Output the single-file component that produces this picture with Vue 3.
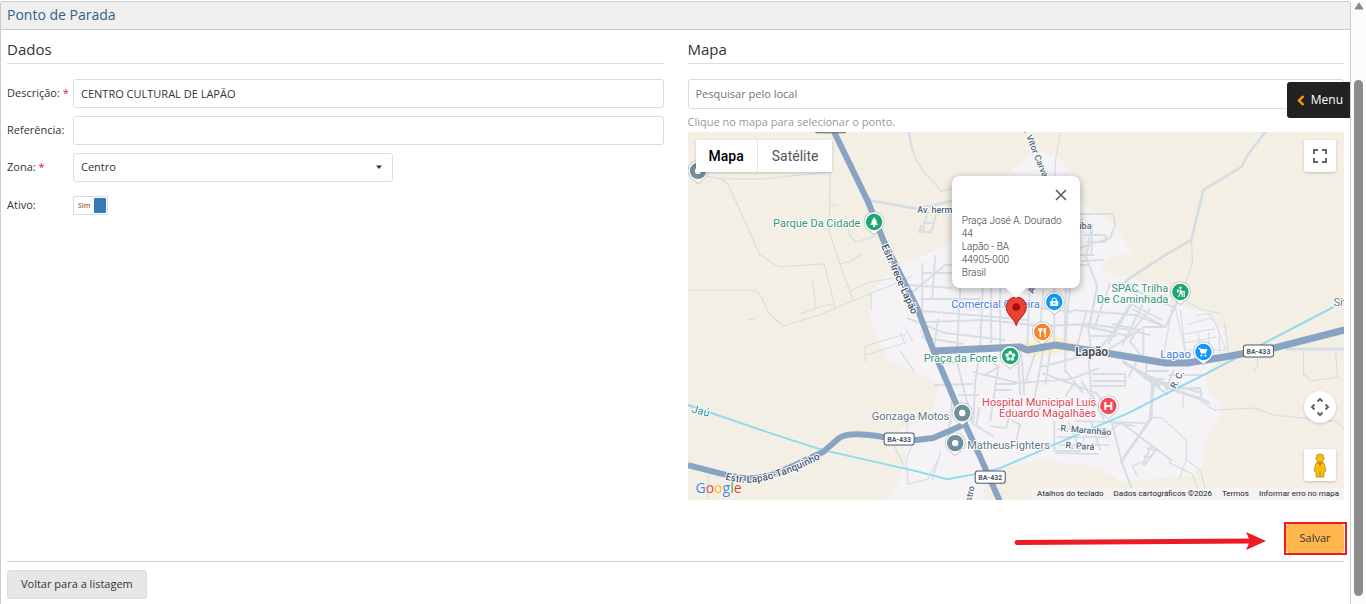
<script setup>
import { ref } from 'vue'

const descricao = ref('CENTRO CULTURAL DE LAPÃO')
const referencia = ref('')
const zona = ref('Centro')
const ativo = ref(true)
const busca = ref('')

const ruralRoads = [
  'M697 172l9 4 15 3h45l25-3 39-4M721 179l7 5 32 71 19 12 45-3 9 35 2 11',
  'M830 172l-1 60 10 30 14 38M829 205h9M845 216l5 20 6 6 20-6M838 264l12-2 12-8M850 291l20-9 30-5',
  'M688 290h66l5 3 10 20 14 13 36-11 36-15 39-16 18-8M812 280l4 28-16 6M833 304l-18 4M871 294v16M747 320l8-1',
  'M909 132l5 24 9 15 18 20 14-3M1060 132l-5 30v18M908 132l4 20M1191 237l1 25-8 25M1185 301l15 8 22 5',
  'M1200 401l14 9 40-2 20 7 46 5 15 1 10 9M1303 351v23l8 7 26-4-2-26M1257 355v12l-4 4',
  'M1150 417l12 1 24 22v19l-7 19M1186 460l14 10 5 20M894 446l14 28M708 475v25',
  'M866 362l-2-14 4-3 38-11M866 355l38-12M900 332l5 12M906 330l7 12M920 330l10 18M900 351l14 20',
  'M914 440l-8 20 2 24 20-5 10-20M941 450l-9 30M927 413l-20 7v17'
]
const townRoads = [
  'M921 225l-2 8M928 210l-6 22h9l6-20M923 223h9M1079 214l34 0 2 11-5 13-36 12M1084 235l21 0 1 7-20 0M1079 225h13l-1 30',
  'M922 263v51M935 255l-3 45M903 300l42-35h22M923 273h29M908 285l44 3M920 299h60M911 310l118 10',
  'M907 318l38 15 60 7M926 322l58-2 60 6 44-2 42 6M921 337l42 7M938 318l-4 30M960 288l-3 60M983 275l-3 73M991 288v55M966 309l57-3 50 6M1000 288v58M1030 280l-3 65M1043 289l-4 54M1054 286v55M1066 280l-2 65',
  'M1082 218l-9 40-5 46-3 41M1091 225l-5 33 11 28-9 43 4 30M1054 255h40M1056 265h32M1081 261l22-1',
  'M1073 310l62 5 30 12M1074 324l15 3 40 9M1089 336h28M1086 312l-12 45M1097 286l-8 41',
  'M1128 283l10 9-28 44-20 23M1138 292l-30 52M1110 283l-17 47M1122 300l40 20M1112 324l28 6M1132 309l33 18M1118 283l57 25M1142 305l-20 40M1150 309l-27 33M1165 327l12-25M1104 352l40-25 20 0M1143 330v28M1150 335l-15-3-5 10 12 15',
  'M938 355l14 42-3 30M948 363l30-3-3 22-2 43M957 363l15 60M934 385l39-1M958 395h21M973 372l45 11 53-4 28-11M985 355l13 12-8 54M998 367l-13 8M1018 358l2 37M1021 351l3 44M1035 353l-12 35M1043 350l-9 50M1050 350l-5 35M1065 350v23M1040 367l47-12M1042 373l54 20 16 20M1065 370l18 23M1088 357l3 35 13 28M1124 362l44 33M1146 363v14M1144 379l20 0M1147 371h21M1136 362l-8 15M1174 369l-9 20M1165 389l35-1 1 11M1168 375h35M1158 381l44 12',
  'M1092 374h33v12h-33M1092 381h33M1075 381l-10 16M1081 381l16 25M1048 401l-14 12M995 384h21M995 390l16 0M979 407l-3 19 17 10M990 426l16 2 3-12h12M1012 420l8 5-4 15',
  'M1154 385l-5 33M1075 421l70 2M1054 421v30l26 0M1057 429h50M1057 437h52M1059 445h50M1055 453l43 1M1068 421l12 30M1090 420l10 30M1109 422l26 4M1112 424l9 36 10 28M1120 422l52 39M1151 418l-31 45M1111 430l10-8M1151 445l-9 20M1156 449l-12 16M1146 448l9 2M1143 456l9 1'
]
const smallRoads = [
  'M1180 310l6 49M1174 304l12 52M1172 306l-9 50M1186 325l20-6 7 0M1184 334l30-5M1184 343l32-6M1188 350h38M1198 333l2 26M1208 333l2 20M1219 333v20M1213 319l13 32M1224 322l4 31M1196 315l14-1 9 18',
  'M1142 461l-10 5 5 10M1168 462l24 12 8 22M1088 431l-12 22M1184 391l-2 18'
]
const wideRoads = [
  'M867 200l50 9 35-8 15 3',
  'M1265 132l-17 22-7 13-38 23-12 50-26 15-37 24-12 12M1285 349h58M1124 363l50 27 27 9 8 4',
  'M1152 380l-1 38-28 40M1160 386l-38-25'
]
const shields = [
  { x: 815, y: 121, w: 31, label: '' },
  { x: 884, y: 433, w: 30, label: 'BA-433' },
  { x: 1243, y: 345, w: 30, label: 'BA-433' },
  { x: 975, y: 471, w: 30, label: 'BA-432' }
]
const pins = [
  { x: 698, y: 171, color: '#718e9b', kind: 'dot' },
  { x: 874, y: 222, color: '#1ea672', kind: 'tree' },
  { x: 1180, y: 292, color: '#1ea672', kind: 'hiker' },
  { x: 1054, y: 302, color: '#1398f7', kind: 'bag' },
  { x: 1042, y: 332, color: '#f9812a', kind: 'fork' },
  { x: 1010, y: 356, color: '#1ea672', kind: 'flower' },
  { x: 1203, y: 352, color: '#1398f7', kind: 'cart' },
  { x: 1108, y: 406, color: '#f64758', kind: 'hospital' },
  { x: 962, y: 413, color: '#718e9b', kind: 'dot' },
  { x: 955, y: 443, color: '#718e9b', kind: 'dot' }
]
</script>

<template>
  <div class="page">
    <main class="panel">
      <header class="panel-head"><h1>Ponto de Parada</h1></header>

      <div class="columns">
        <section>
          <h2>Dados</h2>
          <form class="fields">
            <label for="descricao">Descrição: <b>*</b></label>
            <input id="descricao" v-model="descricao" class="box" type="text">
            <label for="referencia">Referência:</label>
            <input id="referencia" v-model="referencia" class="box" type="text">
            <label for="zona">Zona: <b>*</b></label>
            <div class="select-wrap">
              <select id="zona" v-model="zona" class="box">
                <option>Centro</option>
              </select>
              <svg width="8" height="5" viewBox="0 0 8 5" aria-hidden="true"><path d="M1 .5h6L4 4z" fill="#333" /></svg>
            </div>
            <label for="ativo">Ativo:</label>
            <label class="toggle"><span>Sim</span><input id="ativo" v-model="ativo" type="checkbox"></label>
          </form>
        </section>

        <section>
          <h2>Mapa</h2>
          <input v-model="busca" class="box search" type="text" placeholder="Pesquisar pelo local" aria-label="Pesquisar pelo local">
          <p class="hint">Clique no mapa para selecionar o ponto.</p>

          <div class="map">
            <svg class="canvas" viewBox="688 132 656 368" preserveAspectRatio="xMidYMid slice" role="img" aria-label="Mapa de Lapão">
              <rect x="688" y="132" width="656" height="368" fill="#f4efe4" />
              <path fill="#f5f3f5" d="M1035 152Q1055 150 1073 175L1079 200 1100 216 1115 226 1133 254 1112 256 1100 266 1115 278 1131 274 1155 300 1177 305 1203 312 1222 330 1230 352 1206 372 1207 390 1220 402 1223 409 1203 443 1203 463 1190 476 1160 478 1120 482 1108 473 1085 465 1060 463 1040 460 1010 466 983 477 985 500H888L900 478 906 455 900 428 915 425 933 410 938 387 920 373 890 362 876 335 868 312 873 290 893 267 916 258 950 245 985 200 1015 165z" />
              <path fill="#fbefd0" d="M1022 341l30-6 24 7v9l-48 6z" />
              <g fill="none" stroke="#d5dee5" stroke-linejoin="round">
                <path v-for="d in ruralRoads" :key="d" :d="d" stroke-width="1.200" />
                <path v-for="d in smallRoads" :key="d" :d="d" stroke-width="1.200" />
                <path v-for="d in townRoads" :key="d" :d="d" stroke-width="1.900" />
                <path v-for="d in wideRoads" :key="d" :d="d" stroke-width="2.800" />
              </g>
              <path fill="none" stroke="#8edbed" stroke-width="2" d="M688 405l88 30 47 15 93 21 31 8 28-5 25-6 53-23 77-33 23-12 50-25 130-68" />
              <g fill="none" stroke="#89a3c2" stroke-width="6" stroke-linejoin="round">
                <path d="M688 465l35 9 20 4q25 1 45-10l35-16 16-14q10-7 44-1l33 3 17-2 30-13" />
                <path d="M833 130l35 72 15 38 34 68 16 42 30 70 17 37 20 45" />
                <path stroke-width="7" d="M933 351l87-4 7 3 28-5 45 7 65 11h22l43-7 43-8 71-18" />
              </g>

              <g v-for="s in shields" :key="s.x">
                <rect :x="s.x" :y="s.y" :width="s.w" height="12" rx="2.500" fill="#fff" stroke="#4d5966" />
                <text v-if="s.label" class="shield" :x="s.x + s.w / 2" :y="s.y + 9">{{ s.label }}</text>
              </g>

              <g v-for="p in pins" :key="p.x" :transform="`translate(${p.x} ${p.y})`">
                <path d="M0 13L-5.500 8.500A10.300 10.300 0 1 1 5.500 8.500z" fill="#7d8992" opacity=".5" />
                <path d="M0 12L-5 8A9.600 9.600 0 1 1 5 8z" fill="#fff" />
                <circle r="8.200" :fill="p.color" />
                <circle v-if="p.kind === 'dot'" r="3.200" fill="#fff" />
                <path v-else-if="p.kind === 'tree'" d="M0-5l3 5H2l2 3H1v2h-2V3h-3l2-3h-1z" fill="#fff" />
                <g v-else-if="p.kind === 'hiker'"><circle cx="0" cy="-4.200" r="1.200" fill="#fff" /><path d="M-3.500-2.500h1.800v3h-1.800z" fill="#fff" /><path d="M0-2.500v3.500l-2 4M0 0l1.800 2v3M0-2l2 2h1.500M3.800-1v6" fill="none" stroke="#fff" stroke-width="1.200" /></g>
                <g v-else-if="p.kind === 'bag'"><path d="M-4-1h8v5h-8z" fill="#fff" /><path d="M-2 0v-2a2 2 0 0 1 4 0v2" fill="none" stroke="#fff" stroke-width="1.200" /><circle cy="1.500" r="1" :fill="p.color" /></g>
                <path v-else-if="p.kind === 'fork'" d="M-3.500-4v3M-2-4v9M-.5-4v3M-3.500-1h3M3-4v9M2-4v5" fill="none" stroke="#fff" stroke-width="1.400" />
                <g v-else-if="p.kind === 'flower'" fill="#fff"><circle cy="-3.300" r="1.900" /><circle cx="3.200" cy="-1" r="1.900" /><circle cx="2" cy="2.800" r="1.900" /><circle cx="-2" cy="2.800" r="1.900" /><circle cx="-3.200" cy="-1" r="1.900" /></g>
                <g v-else-if="p.kind === 'cart'" fill="#fff"><path d="M-5-4h2l.6 1H4L2.500 1.500h-5L-4-3h-1z" /><circle cx="-2" cy="3.500" r="1.100" /><circle cx="2" cy="3.500" r="1.100" /></g>
                <path v-else d="M-3-4v8M3-4v8M-3 0h6" fill="none" stroke="#fff" stroke-width="2" />
              </g>

              <g class="place">
                <g fill="#329478">
                  <text x="773" y="227">Parque Da Cidade</text>
                  <text x="1168" y="292" text-anchor="end">SPAC Trilha</text>
                  <text x="1168" y="303" text-anchor="end">De Caminhada</text>
                  <text x="997" y="362" text-anchor="end">Praça da Fonte</text>
                </g>
                <g fill="#3b7ce0">
                  <text x="951" y="308">Comercial Oliveira</text>
                  <text x="1160" y="358">Lapao</text>
                </g>
                <g fill="#de4458">
                  <text x="1096" y="406" text-anchor="end">Hospital Municipal Luís</text>
                  <text x="1096" y="417" text-anchor="end">Eduardo Magalhães</text>
                </g>
                <g fill="#607785">
                  <text x="949" y="420" text-anchor="end">Gonzaga Motos</text>
                  <text x="967" y="449">MatheusFighters</text>
                  <text x="1333" y="306">Sít</text>
                </g>
                <text x="691" y="412" fill="#218e9e" transform="rotate(15 691 412)">Jaú</text>
                <text class="town" x="1075" y="356">Lapão</text>
              </g>
              <g class="street">
                <path id="tanquinho" d="M725 479Q750 488 786 474T837 448" fill="none" />
                <text class="estr"><textPath href="#tanquinho">Estr. Lapão-Tanquinho</textPath></text>
                <text class="estr" transform="translate(881 246) rotate(66)">Estr. Irece-Lapão</text>
                <text transform="translate(1024 132) rotate(68)">. Vítor Carval</text>
                <text x="917" y="213">Av. herm</text>
                <text x="1079" y="229">iba</text>
                <text transform="translate(1060 431) rotate(5)">R. Maranhão</text>
                <text transform="translate(1065 448) rotate(4)">R. Pará</text>
                <text transform="translate(1175 389) rotate(-62)">R. C.</text>
                <text transform="translate(971 502) rotate(-78)">stro</text>
                <text transform="translate(1033 294) rotate(-70)">A.</text>
              </g>

              <path d="M1016 326c-1-8-10-10-10-19a10 10 0 0 1 20 0c0 9-9 11-10 19z" fill="#ea4335" stroke="#c5221f" />
              <circle cx="1016" cy="307" r="3.800" fill="#a50e0e" />
            </svg>

            <div class="map-type">
              <button class="on" type="button">Mapa</button>
              <button type="button">Satélite</button>
            </div>
            <button class="ctl full" type="button" aria-label="Tela cheia">
              <svg width="16" height="16" viewBox="0 0 16 16"><path d="M2 6V2h4M10 2h4v4M14 10v4h-4M6 14H2v-4" fill="none" stroke="#666" stroke-width="2" /></svg>
            </button>
            <button class="ctl move" type="button" aria-label="Controles da câmera">
              <svg width="20" height="20" viewBox="0 0 20 20"><path d="M7.500 4.500L10 2l2.500 2.500M7.500 15.500L10 18l2.500-2.500M4.500 7.500L2 10l2.500 2.500M15.500 7.500L18 10l-2.500 2.500" fill="none" stroke="#666" stroke-width="2" /></svg>
            </button>
            <button class="ctl pegman" type="button" aria-label="Street View">
              <svg width="14" height="25" viewBox="0 0 14 25"><path d="M3 10q4-2 8 0l2 8-2 1v5H3v-5l-2-1z" fill="#fbbc04" stroke="#c99a37" /><path d="M7 18v6" stroke="#c88322" /><path d="M4 9h6l-3 4z" fill="#e37400" /><circle cx="7" cy="5" r="4" fill="#fbbc04" stroke="#c99a37" /></svg>
            </button>

            <div class="info">
              <button type="button" aria-label="Fechar"><svg width="12" height="12" viewBox="0 0 12 12"><path d="M1 1l10 10M11 1L1 11" stroke="#555" stroke-width="1.500" /></svg></button>
              <address>Praça José A. Dourado<br>44<br>Lapão - BA<br>44905-000<br>Brasil</address>
            </div>

            <a class="google" href="#" aria-label="Google"><i class="b">G</i><i class="r">o</i><i class="y">o</i><i class="b">g</i><i class="g">l</i><i class="r">e</i></a>
            <div class="legal">
              <button type="button">Atalhos do teclado</button>
              <span>Dados cartográficos ©2026</span>
              <a href="#">Termos</a>
              <a href="#">Informar erro no mapa</a>
            </div>
          </div>
        </section>
      </div>

      <div class="actions">
        <svg class="arrow" width="252" height="20" viewBox="0 0 252 20" aria-hidden="true"><path d="M3 11.500L238 10" fill="none" stroke="#ed1c24" stroke-width="5" stroke-linecap="round" /><path d="M232 1l20 9-20 9 4-9z" fill="#ed1c24" /></svg>
        <div class="marked"><button class="save" type="submit">Salvar</button></div>
      </div>
      <footer><button class="back" type="button">Voltar para a listagem</button></footer>
    </main>

    <div class="scrollbar" aria-hidden="true">
      <svg width="10" height="8" viewBox="0 0 10 8"><path d="M5 1L9 7H1z" fill="#888" stroke="#888" stroke-linejoin="round" /></svg>
      <div class="thumb"></div>
    </div>
    <button class="menu" type="button">
      <svg width="8" height="11" viewBox="0 0 8 11" aria-hidden="true"><path d="M6.500 1L2 5.500 6.500 10" fill="none" stroke="#ff9c00" stroke-width="2.400" /></svg>
      Menu
    </button>
  </div>
</template>

<style>
body { background: #fff; }
</style>

<style scoped>
* { box-sizing: border-box; }
.page {
  position: relative;
  display: grid;
  grid-template-columns: minmax(0, 1fr) 15px;
  min-height: 100vh;
  padding-top: 1px;
  color: #333;
  font: 11px/16px "Open Sans", "Noto Sans", sans-serif;
}
button, input, select { font: inherit; color: inherit; }
button { cursor: pointer; }
h1, h2, p { margin: 0; font-weight: 400; }
.panel { border: 1px solid #ccc; border-bottom: 0; border-radius: 3px 3px 0 0; }
.panel-head { padding: 2px 6px 4px; background: #efefef; border-bottom: 1px solid #ccc; }
h1 { color: #31618d; font-size: 14px; line-height: 21px; }
.columns { display: grid; grid-template-columns: minmax(0, 1fr) minmax(0, 1fr); gap: 24px; padding: 0 6px; }
h2 { height: 34px; margin-bottom: 15px; padding-top: 9px; border-bottom: 1px solid #ddd; color: #333; font-size: 15px; line-height: 20px; }
.fields { display: grid; grid-template-columns: 66px minmax(0, 1fr); gap: 8px 0; align-items: center; }
.fields b { color: #d22; font-weight: 400; }
.fields > label:not(.toggle) { padding-bottom: 1px; white-space: nowrap; }
.box { width: 100%; height: 30px; padding: 0 7px 1px; background: #fff; border: 1px solid #ddd; border-radius: 3px; outline: 0; }
.select-wrap { position: relative; width: 320px; max-width: 100%; }
.select-wrap select { display: block; appearance: none; }
.select-wrap svg { position: absolute; right: 10px; top: 12px; pointer-events: none; }
.fields .box { height: 29px; }
.toggle { display: flex; align-items: center; justify-content: space-between; width: 35px; height: 19px; margin: 6px 0; padding: 0 1px 0 4px; border: 1px solid #ddd; border-radius: 1px; color: #a0683c; font-size: 7px; font-weight: 600; }
.toggle input { appearance: none; width: 12px; height: 15px; margin: 0; border-radius: 1px; background: #337ab7; }
.search { display: block; }
.search::placeholder { color: #757575; opacity: 1; }
.hint { padding: 5px 0 2px; color: #999; }
.map { position: relative; height: 368px; overflow: hidden; font-family: Roboto, sans-serif; }
.canvas { display: block; width: 100%; height: 100%; }
.canvas text { paint-order: stroke; stroke: #fff; stroke-width: 2px; stroke-linejoin: round; }
.place { font-size: 11px; }
.canvas .town { font-size: 12px; font-weight: 700; fill: #48505a; }
.street { font-size: 9px; font-weight: 500; fill: #52677a; }
.street .estr { font-size: 10px; fill: #3f5068; }
.canvas .shield { font-size: 7px; font-weight: 700; fill: #4d5966; text-anchor: middle; stroke: none; }
.map button { border: 0; background: #fff; }
.map-type { position: absolute; top: 8px; left: 8px; display: flex; height: 32px; border-radius: 2px; box-shadow: 0 1px 3px #0003; font-size: 14px; }
.map-type button { padding: 0 14px; color: #565656; }
.map-type .on { padding: 0 13px; color: #000; font-weight: 500; border-right: 1px solid #e6e6e6; }
.ctl { position: absolute; right: 8px; display: grid; place-items: center; width: 32px; height: 32px; padding: 0; border-radius: 2px; box-shadow: 0 1px 3px #0003; }
.full { top: 8px; }
.move { bottom: 77px; border-radius: 50%; }
.pegman { bottom: 19px; }
.info { position: absolute; top: 44px; left: 50%; width: 128px; margin-left: -64px; padding: 38px 10px 9px; background: #fff; border-radius: 8px; box-shadow: 0 2px 7px 1px #0004; color: #333; font-size: 10px; line-height: 13px; }
.info::after { content: ""; position: absolute; top: 100%; left: 50%; margin-left: -10px; border: 10px solid transparent; border-top-color: #fff; border-bottom: 0; }
.info address { font-style: normal; font-weight: 300; white-space: nowrap; }
.info button { position: absolute; top: 7px; right: 7px; display: grid; place-items: center; width: 24px; height: 24px; padding: 0; }
.google { position: absolute; left: 8px; bottom: 2px; font: 500 14px/20px "Open Sans", sans-serif; text-decoration: none; }
.google i { font-style: normal; text-shadow: 0 0 2px #fff; }
.b { color: #4285f4; }
.r { color: #ea4335; }
.y { color: #fbbc04; }
.g { color: #34a853; }
.legal { position: absolute; right: 0; bottom: 0; display: flex; height: 12px; background: #f5f5f5cc; color: #222; font-size: 8px; line-height: 12px; }
.legal > * { padding: 0 5px; white-space: nowrap; color: #222; text-decoration: none; }
.legal button { background: none; }
.actions { display: flex; justify-content: flex-end; align-items: center; gap: 20px; margin: 0 6px; padding: 24px 0 8px; border-bottom: 1px solid #ccc; }
.arrow { margin-top: 5px; }
.marked { position: relative; display: flex; }
.marked::after { content: ""; position: absolute; inset: -2px -3px -2px -2px; border: 2px solid #ed1c24; pointer-events: none; }
.save, .back { height: 29px; padding: 0 13px 2px; border: 1px solid #ddd; border-radius: 3px; background: #e7e7e7; }
.save { width: 58px; border-color: #ffb74d; background: #ffb74d; }
footer { padding: 8px 6px 5px; }
.save { padding: 0 0 2px; }
.scrollbar { display: flex; flex-direction: column; align-items: center; padding: 1px 0 8px; background: #fcfcfc; }
.thumb { flex: 1; width: 9px; margin-top: 70px; border-radius: 5px; background: #8b8b8b; }
.menu { position: absolute; top: 82px; right: 16px; display: flex; align-items: center; gap: 6px; height: 36px; padding: 0 7px 0 10px; border: 0; border-radius: 3px 0 0 3px; background: #222; color: #fff; font-size: 12px; }
</style>
